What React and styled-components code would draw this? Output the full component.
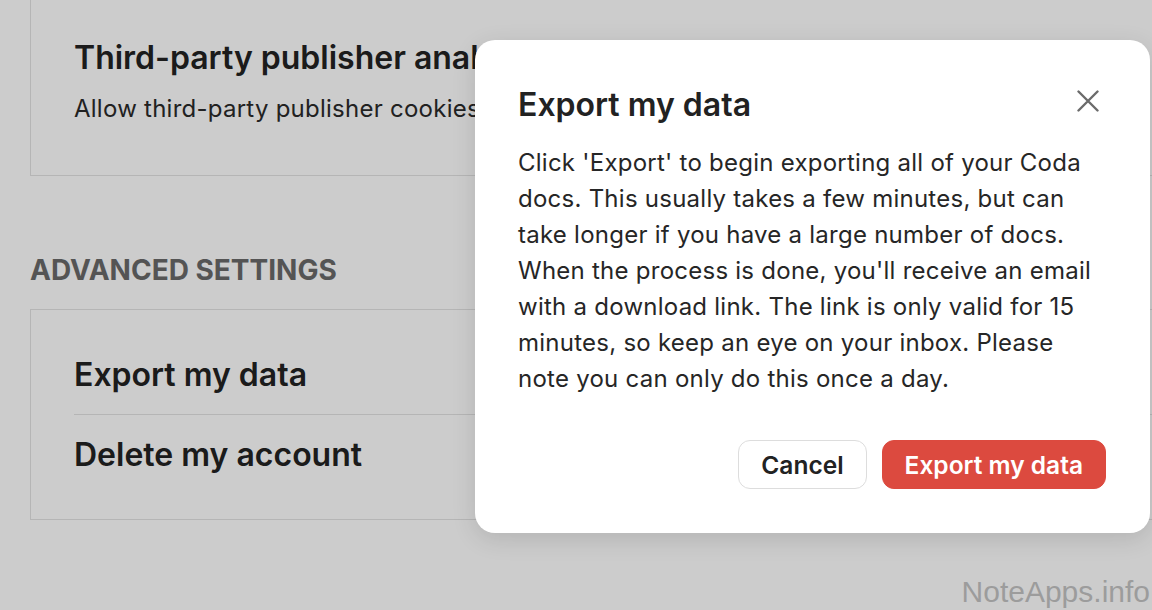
import React from "react";
import styled, { createGlobalStyle } from "styled-components";

const GlobalStyle = createGlobalStyle`
  html, body {
    margin: 0;
    padding: 0;
    background: #ffffff;
    overflow: hidden;
  }
  body {
    font-family: "Inter", "Noto Sans", sans-serif;
    -webkit-font-smoothing: antialiased;
  }
`;

const Page = styled.div`
  width: 1152px;
  height: 610px;
  position: relative;
  overflow: hidden;
  padding: 0 0 0 30px;
  box-sizing: border-box;
`;

const Card = styled.div`
  width: 1180px;
  border: 1px solid #e3e3e3;
  border-top: ${(p) => (p.$openTop ? "none" : "1px solid #e3e3e3")};
  padding: ${(p) => p.$padding};
  box-sizing: border-box;
`;

const CardTitle = styled.h3`
  margin: 0;
  font-size: 32px;
  font-weight: 600;
  color: #222;
  line-height: 40px;
  white-space: nowrap;
`;

const CardText = styled.p`
  margin: 15px 0 0;
  font-size: 24px;
  letter-spacing: 0.25px;
  color: #2a2a2a;
  line-height: 32px;
  white-space: nowrap;
`;

const SectionTitle = styled.h2`
  margin: 77px 0 22px;
  font-size: 28px;
  font-weight: 700;
  color: #6a6a6a;
  line-height: 34px;
`;

const Row = styled.div`
  padding: ${(p) => p.$padding};
  border-bottom: ${(p) => (p.$divider ? "1px solid #e3e3e3" : "none")};
  font-size: 32px;
  font-weight: 600;
  color: #222;
  line-height: 40px;
`;

const Overlay = styled.div`
  position: absolute;
  inset: 0;
  background: rgba(0, 0, 0, 0.2);
`;

const Modal = styled.div`
  position: absolute;
  left: 475px;
  top: 40px;
  width: 675px;
  background: #ffffff;
  border-radius: 20px;
  padding: 45px 44px 44px 43px;
  box-sizing: border-box;
  box-shadow: 0 6px 24px rgba(0, 0, 0, 0.12);
`;

const ModalHeader = styled.div`
  display: flex;
  justify-content: space-between;
  align-items: center;
`;

const ModalTitle = styled.h2`
  margin: 0;
  font-size: 32px;
  font-weight: 600;
  color: #222;
  line-height: 40px;
`;

const CloseButton = styled.button`
  border: none;
  background: transparent;
  padding: 0;
  margin: -8px 6px 0 0;
  width: 24px;
  height: 24px;
  display: flex;
  align-items: center;
  justify-content: center;
  cursor: pointer;
`;

const ModalBody = styled.p`
  margin: 20px 0 0;
  max-width: 578px;
  font-size: 24px;
  letter-spacing: 0.25px;
  line-height: 36px;
  color: #262626;
`;

const Actions = styled.div`
  display: flex;
  justify-content: flex-end;
  gap: 15px;
  margin-top: 43px;
`;

const Button = styled.button`
  height: 49px;
  padding: 0 22px;
  border-radius: 12px;
  font-family: "Inter", "Noto Sans", sans-serif;
  font-size: 24.5px;
  font-weight: 600;
  cursor: pointer;
  border: 1px solid ${(p) => (p.$primary ? "#dc4a3f" : "#dddddd")};
  background: ${(p) => (p.$primary ? "#dc4a3f" : "#ffffff")};
  color: ${(p) => (p.$primary ? "#ffffff" : "#222222")};
`;

const Watermark = styled.div`
  position: absolute;
  right: 2px;
  bottom: 1px;
  font-family: "Liberation Sans", Arial, sans-serif;
  font-size: 30px;
  color: #9c9c9c;
`;

export default function App() {
  return (
    <>
      <GlobalStyle />
      <Page>
        <Card $openTop $padding="38px 44px 50px 43px">
          <CardTitle>Third-party publisher analytics</CardTitle>
          <CardText>Allow third-party publisher cookies to track usage of your published docs.</CardText>
        </Card>
        <SectionTitle>ADVANCED SETTINGS</SectionTitle>
        <Card $padding="0 0 0 43px">
          <Row $divider $padding="45px 0 19px">Export my data</Row>
          <Row $padding="20px 0 44px">Delete my account</Row>
        </Card>
        <Overlay />
        <Modal>
          <ModalHeader>
            <ModalTitle>Export my data</ModalTitle>
            <CloseButton aria-label="Close">
              <svg width="22" height="22" viewBox="0 0 22 22">
                <path d="M1.5 1.5 L20.5 20.5 M20.5 1.5 L1.5 20.5" stroke="#6b6b6b" strokeWidth="2.4" strokeLinecap="round" />
              </svg>
            </CloseButton>
          </ModalHeader>
          <ModalBody>
            Click 'Export' to begin exporting all of your Coda docs. This usually takes a few minutes, but can
            take longer if you have a large number of docs. When the process is done, you'll receive an email
            with a download link. The link is only valid for 15 minutes, so keep an eye on your inbox. Please
            note you can only do this once a day.
          </ModalBody>
          <Actions>
            <Button>Cancel</Button>
            <Button $primary>Export my data</Button>
          </Actions>
        </Modal>
        <Watermark>NoteApps.info</Watermark>
      </Page>
    </>
  );
}
